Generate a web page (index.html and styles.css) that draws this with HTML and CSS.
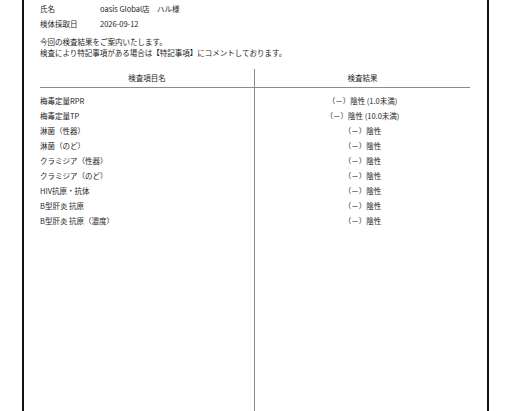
FILE: index.html
```html
<!DOCTYPE html>
<html lang="ja">
<head>
<meta charset="utf-8">
<link rel="stylesheet" href="styles.css">
</head>
<body>
<div class="page">
  <div class="info">
    <div class="label">氏名</div><div class="value">oasis Global店　ハル様</div>
    <div class="label">検体採取日</div><div class="value">2026-09-12</div>
  </div>
  <p class="note">今回の検査結果をご案内いたします。<br>検査により特記事項がある場合は【特記事項】にコメントしております。</p>
  <div class="results">
    <div class="col col-left">
      <div class="head">検査項目名</div>
      <ul class="rows">
        <li>梅毒定量RPR</li>
        <li>梅毒定量TP</li>
        <li>淋菌（性器）</li>
        <li>淋菌（のど）</li>
        <li>クラミジア（性器）</li>
        <li>クラミジア（のど）</li>
        <li>HIV抗原・抗体</li>
        <li>B型肝炎 抗原</li>
        <li>B型肝炎 抗原（濃度）</li>
      </ul>
    </div>
    <div class="col col-right">
      <div class="head">検査結果</div>
      <ul class="rows center">
        <li>（－）陰性 (1.0未満)</li>
        <li>（－）陰性 (10.0未満)</li>
        <li>（－）陰性</li>
        <li>（－）陰性</li>
        <li>（－）陰性</li>
        <li>（－）陰性</li>
        <li>（－）陰性</li>
        <li>（－）陰性</li>
        <li>（－）陰性</li>
      </ul>
    </div>
  </div>
</div>
</body>
</html>
```
FILE: styles.css
```css
html, body {
  margin: 0;
  padding: 0;
  background: #fff;
}
body {
  font-family: "Noto Sans CJK JP", "Noto Sans", sans-serif;
  font-size: 7.5px;
  color: #1e1e1e;
  overflow: hidden;
}
.page {
  margin-left: 22px;
  width: 467px;
  min-height: 411px;
  box-sizing: border-box;
  border-left: 2px solid #111;
  border-right: 2px solid #111;
  padding: 0.5px 17px 0 16px;
  display: flex;
  flex-direction: column;
}
.info {
  display: grid;
  grid-template-columns: 60px 1fr;
  line-height: 15px;
}
.note {
  margin: 5.5px 0 0;
  line-height: 11px;
}
.results {
  margin-top: 10.5px;
  flex: 1;
  display: grid;
  grid-template-columns: 1fr 1fr;
}
.col-left {
  border-right: 1.5px solid #8a8a8a;
}
.head {
  height: 18px;
  line-height: 18px;
  text-align: center;
  border-bottom: 1px solid #8a8a8a;
}
.rows {
  list-style: none;
  margin: 0;
  padding: 5.5px 0 0;
  line-height: 15px;
}
.center {
  text-align: center;
}
```
